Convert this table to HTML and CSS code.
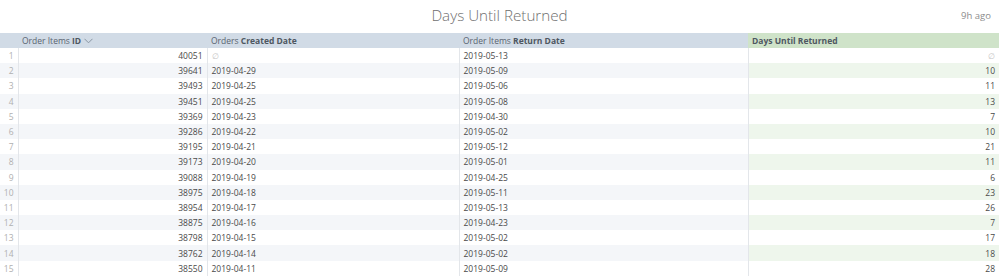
FILE: index.html
```html
<!DOCTYPE html>
<html lang="en">
<head>
    <meta charset="UTF-8">
    <title>Days Until Returned</title>
    <link rel="stylesheet" href="styles.css">
</head>
<body>
    <header class="tile-header">
        <h1 class="tile-title">Days Until Returned</h1>
        <span class="tile-age">9h ago</span>
    </header>

    <table class="grid">
        <colgroup>
            <col class="col-num">
            <col class="col-id">
            <col class="col-created">
            <col class="col-return">
            <col class="col-days">
        </colgroup>
        <thead>
            <tr>
                <th class="num"></th>
                <th>Order Items <b>ID</b> <svg class="sort" width="9" height="6" viewBox="0 0 9 6"><path d="M0.5 0.8 L4.5 4.8 L8.5 0.8" fill="none" stroke="#8a96a3" stroke-width="1"/></svg></th>
                <th>Orders <b>Created Date</b></th>
                <th>Order Items <b>Return Date</b></th>
                <th class="measure"><b>Days Until Returned</b></th>
            </tr>
        </thead>
        <tbody>
            <tr><td class="num">1</td><td class="right">40051</td><td class="null">&#8709;</td><td>2019-05-13</td><td class="right null measure">&#8709;</td></tr>
            <tr><td class="num">2</td><td class="right">39641</td><td>2019-04-29</td><td>2019-05-09</td><td class="right measure">10</td></tr>
            <tr><td class="num">3</td><td class="right">39493</td><td>2019-04-25</td><td>2019-05-06</td><td class="right measure">11</td></tr>
            <tr><td class="num">4</td><td class="right">39451</td><td>2019-04-25</td><td>2019-05-08</td><td class="right measure">13</td></tr>
            <tr><td class="num">5</td><td class="right">39369</td><td>2019-04-23</td><td>2019-04-30</td><td class="right measure">7</td></tr>
            <tr><td class="num">6</td><td class="right">39286</td><td>2019-04-22</td><td>2019-05-02</td><td class="right measure">10</td></tr>
            <tr><td class="num">7</td><td class="right">39195</td><td>2019-04-21</td><td>2019-05-12</td><td class="right measure">21</td></tr>
            <tr><td class="num">8</td><td class="right">39173</td><td>2019-04-20</td><td>2019-05-01</td><td class="right measure">11</td></tr>
            <tr><td class="num">9</td><td class="right">39088</td><td>2019-04-19</td><td>2019-04-25</td><td class="right measure">6</td></tr>
            <tr><td class="num">10</td><td class="right">38975</td><td>2019-04-18</td><td>2019-05-11</td><td class="right measure">23</td></tr>
            <tr><td class="num">11</td><td class="right">38954</td><td>2019-04-17</td><td>2019-05-13</td><td class="right measure">26</td></tr>
            <tr><td class="num">12</td><td class="right">38875</td><td>2019-04-16</td><td>2019-04-23</td><td class="right measure">7</td></tr>
            <tr><td class="num">13</td><td class="right">38798</td><td>2019-04-15</td><td>2019-05-02</td><td class="right measure">17</td></tr>
            <tr><td class="num">14</td><td class="right">38762</td><td>2019-04-14</td><td>2019-05-02</td><td class="right measure">18</td></tr>
            <tr><td class="num">15</td><td class="right">38550</td><td>2019-04-11</td><td>2019-05-09</td><td class="right measure">28</td></tr>
        </tbody>
    </table>
</body>
</html>
```

FILE: styles.css
```css
body {
    margin: 0;
    font-family: "Open Sans", Arial, sans-serif;
    color: #4a4a4a;
    background-color: #fff;
}
.tile-header {
    height: 33px;
    display: flex;
    align-items: flex-start;
    justify-content: center;
    position: relative;
}
.tile-title {
    margin: 5px 0 0;
    font-size: 15.2px;
    line-height: 21px;
    font-weight: 300;
    color: #707070;
}
.tile-age {
    position: absolute;
    right: 8px;
    top: 9px;
    font-size: 9.5px;
    color: #8c8c8c;
}
.grid {
    width: 999px;
    table-layout: fixed;
    border-collapse: collapse;
    font-size: 8.5px;
}
.col-num { width: 18px; }
.col-id { width: 189px; }
.col-created { width: 252px; }
.col-return { width: 289px; }
.col-days { width: 251px; }
th, td {
    height: 15px;
    padding: 0 4px;
    text-align: left;
    white-space: nowrap;
    overflow: hidden;
    border-left: 1px solid #e3e6ea;
}
th {
    background-color: #d1dbe6;
    font-weight: normal;
    color: #5a6470;
    border-left: none;
}
th b {
    font-weight: 700;
    color: #4e5761;
}
td {
    height: 15.2px;
}
tbody tr:nth-child(even) td {
    background-color: #f4f6f9;
}
th.measure {
    background-color: #cfe3c9;
}
tbody tr:nth-child(even) td.measure {
    background-color: #eef6ec;
}
.num {
    border-left: none;
    color: #b0b0b0;
    text-align: right;
    padding: 0 4px 0 0;
}
.right {
    text-align: right;
}
.null {
    color: #c4c4c4;
    font-size: 7.5px;
}
.sort {
    margin-left: 1px;
    vertical-align: 0;
}
```
